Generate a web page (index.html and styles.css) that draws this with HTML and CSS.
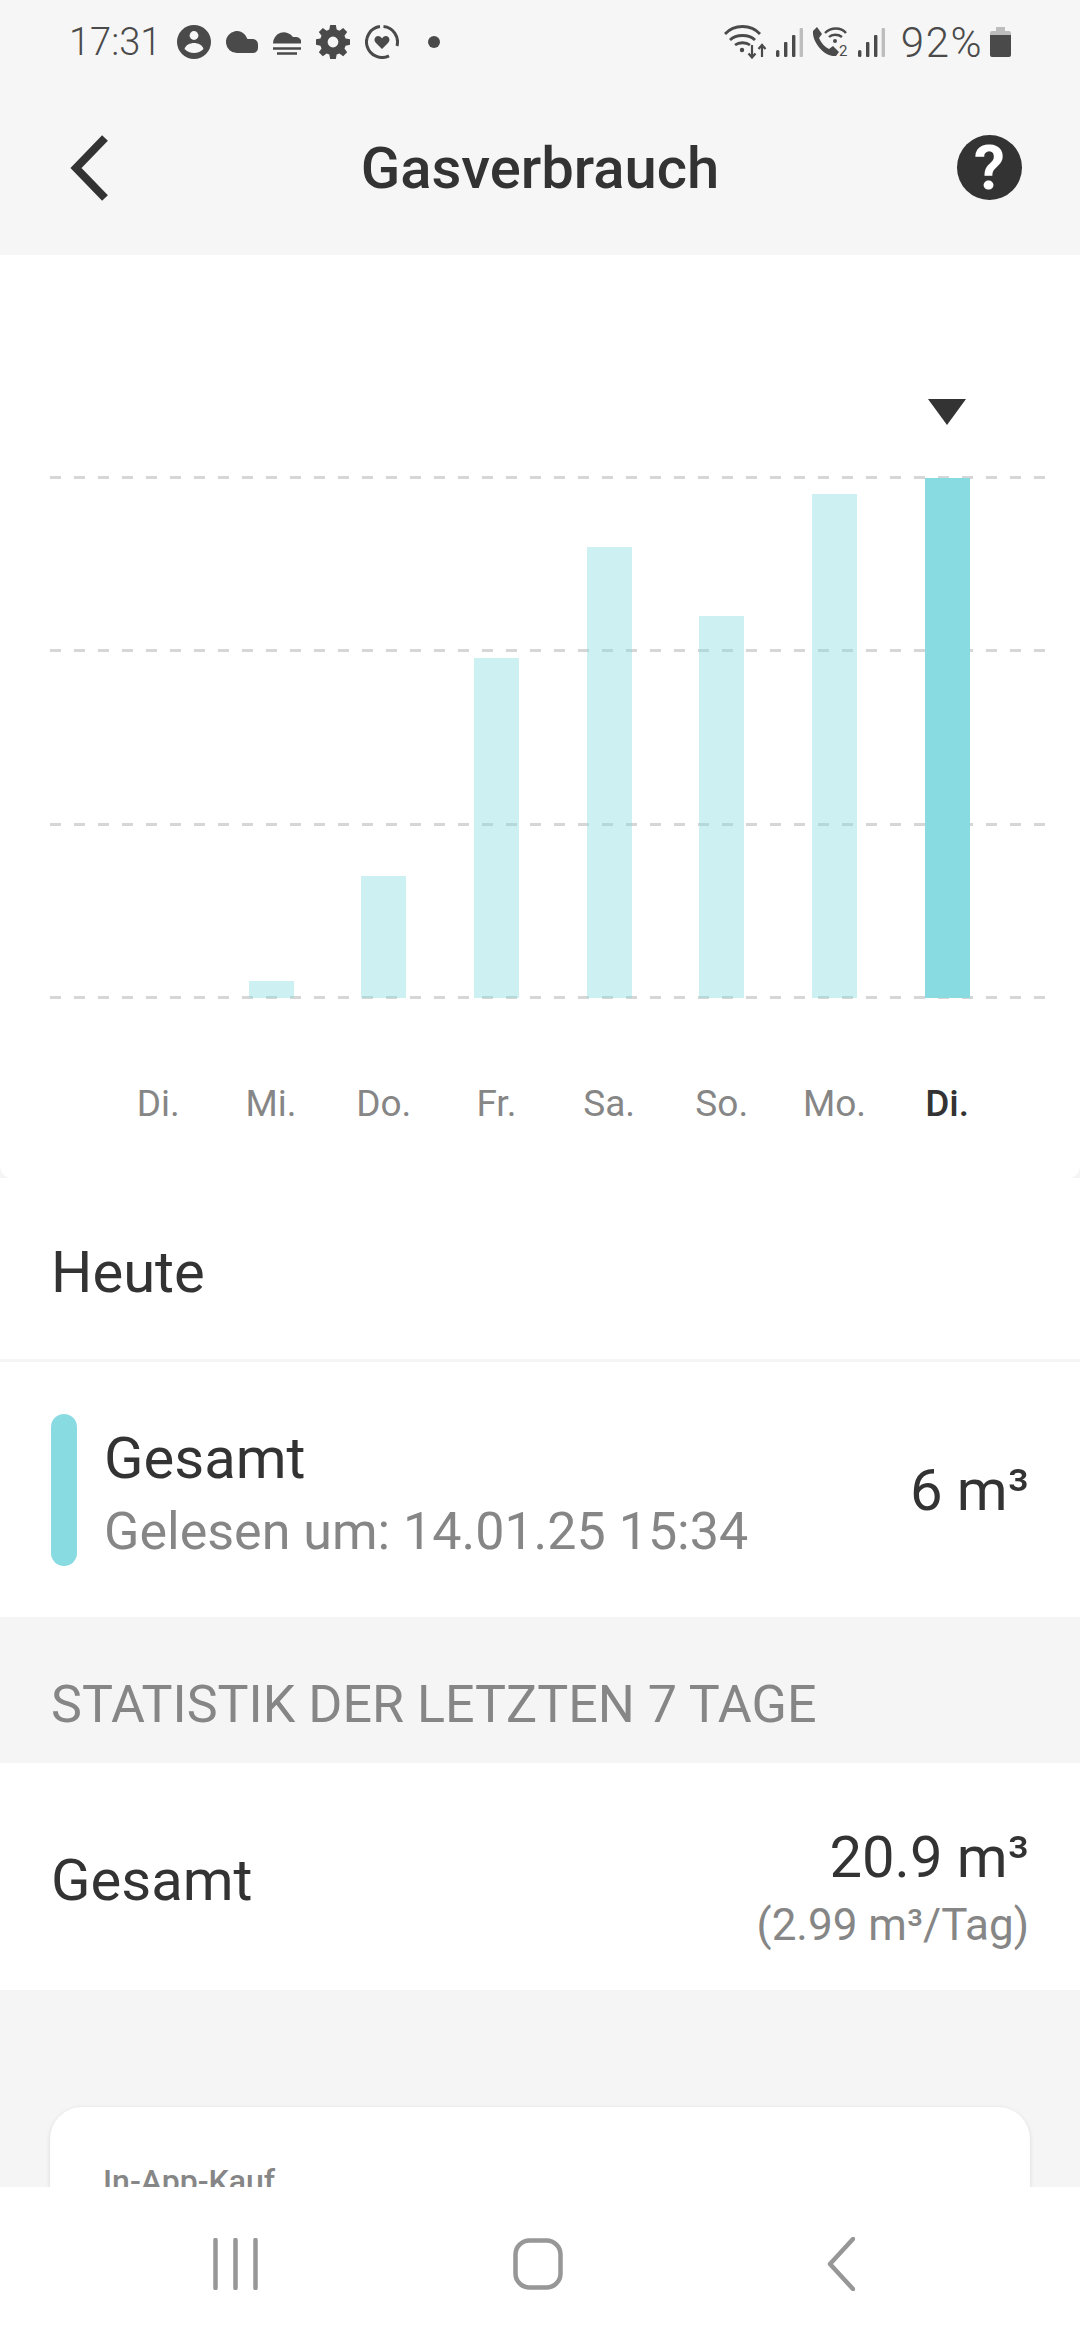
FILE: index.html
```html
<!DOCTYPE html>
<html lang="de">
<head>
    <meta charset="UTF-8">
    <title>Gasverbrauch</title>
    <link rel="stylesheet" href="styles.css">
</head>
<body>
    <div class="screen">
        <div class="status-bar">
            <span class="status-time">17:31</span>
            <div class="status-icons">
                <svg width="34" height="34" viewBox="0 0 34 34"><circle cx="17" cy="17" r="17" fill="#4a4a4a"/><circle cx="17" cy="10.500" r="4.400" fill="#f6f6f6"/><path d="M7.500 24c1-4 5.500-6 9.500-6s8.500 2 9.500 6c-2.500 2.500-6 4-9.500 4s-7-1.500-9.500-4z" fill="#f6f6f6"/></svg>
                <svg width="32" height="22" viewBox="0 0 32 22"><path d="M11 22A11 11 0 1 1 21.500 8H26.500a5.500 5.500 0 0 1 5.500 5.500V17a5 5 0 0 1-5 5z" fill="#4a4a4a"/></svg>
                <svg width="28" height="25" viewBox="0 0 28 25"><path d="M0 13.500A11 11 0 0 1 20 7h3a5 5 0 0 1 5 6.500z" fill="#4a4a4a"/><path d="M0 18.500h28M4 23.500h20" stroke="#4a4a4a" stroke-width="2.600" fill="none"/></svg>
                <svg width="34" height="34" viewBox="0 0 24 24"><path fill="#4a4a4a" fill-rule="evenodd" d="M10 0h4l.6 3.200 1.900.8L19.200 2.100l2.800 2.800-1.900 2.700.8 1.900 3.100.5v4l-3.100.6-.8 1.900 1.900 2.700-2.800 2.800-2.700-1.900-1.900.8L14 24h-4l-.6-3.100-1.900-.8-2.700 1.900L2 19.200l1.900-2.700-.8-1.900L0 14v-4l3.100-.5.8-1.900L2 4.900 4.800 2.100 7.500 4l1.900-.8zM12 8.200a3.800 3.800 0 1 0 0 7.600 3.800 3.800 0 0 0 0-7.600z"/></svg>
                <svg width="34" height="34" viewBox="0 0 34 34"><path d="M15 1.600A15.500 15.500 0 1 0 24 30.800M18.500 1.600A15.500 15.500 0 0 1 32 21" stroke="#4a4a4a" stroke-width="3" fill="none"/><path d="M17 24l-6-6c-3-3-1-7 2-7 2 0 3 1 4 2.500 1-1.500 2-2.500 4-2.500 3 0 5 4 2 7z" fill="#4a4a4a"/></svg>
                <span class="status-dot"></span>
            </div>
            <div class="status-right">
                <svg width="43" height="34" viewBox="0 0 43 34"><path d="M1 9c9-10 26-10 35 0M6 15c6-6 19-6 25 0M11 20c4-3 11-3 15 0" stroke="#4a4a4a" stroke-width="2.800" fill="none"/><circle cx="18" cy="25" r="2.200" fill="#4a4a4a"/><path d="M28 20v12M24.500 28.500l3.500 4 3.500-4M38 32V20M34.500 24l3.500-4 3.500 4" stroke="#4a4a4a" stroke-width="2.200" fill="none"/></svg>
                <svg width="27" height="30" viewBox="0 0 27 30"><rect x="0" y="23" width="3.400" height="7" rx="1.500" fill="#4a4a4a"/><rect x="8" y="15" width="3.400" height="15" rx="1" fill="#4a4a4a"/><rect x="16" y="8" width="3.400" height="22" rx="1" fill="#4a4a4a"/><rect x="23.600" y="1" width="3.400" height="29" rx="1" fill="#bdbdbd"/></svg>
                <svg width="37" height="30" viewBox="0 0 37 30"><path d="M5 0l5 7-3 4c2 5 6 9 10 11l4-3 6 6-3 4C12 30 0 15 1 4z" fill="#4a4a4a"/><path d="M13 6c6-6 16-6 21 0M17 10c3-3 9-3 13 0" stroke="#4a4a4a" stroke-width="2.400" fill="none"/><circle cx="23" cy="14" r="2" fill="#4a4a4a"/><text x="27" y="29" class="sim-number">2</text></svg>
                <svg width="27" height="30" viewBox="0 0 27 30"><rect x="0" y="23" width="3.400" height="7" rx="1.500" fill="#4a4a4a"/><rect x="8" y="15" width="3.400" height="15" rx="1" fill="#4a4a4a"/><rect x="16" y="8" width="3.400" height="22" rx="1" fill="#4a4a4a"/><rect x="23.600" y="1" width="3.400" height="29" rx="1" fill="#bdbdbd"/></svg>
                <span class="status-battery-text">92%</span>
                <svg width="21" height="30" viewBox="0 0 21 30"><path d="M6 0h9v4H6zM2 4h17a2 2 0 0 1 2 2v2H0V6a2 2 0 0 1 2-2z" fill="#bdbdbd"/><path d="M0 8h21v20a2 2 0 0 1-2 2H2a2 2 0 0 1-2-2z" fill="#4a4a4a"/></svg>
            </div>
        </div>

        <header class="app-header">
            <svg class="back-icon" width="40" height="66" viewBox="0 0 40 66"><path d="M36 3L7 33l29 30" stroke="#333" stroke-width="8" fill="none"/></svg>
            <h1>Gasverbrauch</h1>
            <span class="help-icon">?</span>
        </header>

        <main class="content">
            <div class="chart-wrap">
                <section class="chart-card">
                    <div class="marker-row"><span class="marker"></span></div>
                    <div class="plot">
                        <div class="grid-lines">
                            <span class="grid-line"></span>
                            <span class="grid-line"></span>
                            <span class="grid-line"></span>
                            <span class="grid-line"></span>
                        </div>
                        <div class="bars">
                            <div class="col"></div>
                            <div class="col"><span class="bar" style="height: 17px"></span></div>
                            <div class="col"><span class="bar" style="height: 122px"></span></div>
                            <div class="col"><span class="bar" style="height: 340px"></span></div>
                            <div class="col"><span class="bar" style="height: 451px"></span></div>
                            <div class="col"><span class="bar" style="height: 382px"></span></div>
                            <div class="col"><span class="bar" style="height: 504px"></span></div>
                            <div class="col"><span class="bar bar-active" style="height: 520px"></span></div>
                        </div>
                    </div>
                    <div class="days">
                        <span>Di.</span>
                        <span>Mi.</span>
                        <span>Do.</span>
                        <span>Fr.</span>
                        <span>Sa.</span>
                        <span>So.</span>
                        <span>Mo.</span>
                        <span class="day-active">Di.</span>
                    </div>
                </section>
            </div>

            <div class="row-today">Heute</div>

            <div class="row-total">
                <span class="total-swatch"></span>
                <div class="total-text">
                    <div class="total-name">Gesamt</div>
                    <div class="total-sub">Gelesen um: 14.01.25 15:34</div>
                </div>
                <div class="total-value">6 m³</div>
            </div>

            <div class="section-title">STATISTIK DER LETZTEN 7 TAGE</div>

            <div class="row-stat">
                <span class="stat-name">Gesamt</span>
                <div class="stat-values">
                    <div class="stat-value">20.9 m³</div>
                    <div class="stat-avg">(2.99 m³/Tag)</div>
                </div>
            </div>

            <section class="promo-card">
                <div class="promo-label">In-App-Kauf</div>
            </section>
        </main>

        <nav class="nav-bar">
            <svg width="45" height="52" viewBox="0 0 45 52"><path d="M2.500 2v48M22.500 2v48M42.500 2v48" stroke="#979797" stroke-width="4.500" stroke-linecap="round" fill="none"/></svg>
            <svg class="nav-home" width="50" height="52" viewBox="0 0 50 52"><rect x="2.500" y="2.500" width="45" height="47" rx="14" stroke="#979797" stroke-width="4.500" fill="none"/></svg>
            <svg width="28" height="54" viewBox="0 0 28 54"><path d="M26 2L3 27l23 25" stroke="#979797" stroke-width="4.500" stroke-linecap="round" stroke-linejoin="round" fill="none"/></svg>
        </nav>
    </div>
</body>
</html>
```

FILE: styles.css
```css
* {
    box-sizing: border-box;
}
body {
    margin: 0;
    font-family: Roboto, "Noto Sans", sans-serif;
    background: #f5f5f5;
    color: #333;
}
.screen {
    width: 1080px;
    height: 2340px;
    display: flex;
    flex-direction: column;
    overflow: hidden;
}

/* status bar */
.status-bar {
    height: 84px;
    flex-shrink: 0;
    display: flex;
    align-items: center;
    padding: 0 69px;
    background: #f6f6f6;
    color: #4a4a4a;
}
.status-time {
    font-size: 38px;
    font-weight: 300;
    margin-right: 16px;
}
.status-icons {
    display: flex;
    align-items: center;
    gap: 15px;
}
.status-dot {
    width: 12px;
    height: 12px;
    margin-left: 14px;
    border-radius: 50%;
    background: #4a4a4a;
}
.status-right {
    margin-left: auto;
    display: flex;
    align-items: center;
    gap: 9px;
}
.status-battery-text {
    font-size: 42px;
    font-weight: 300;
    letter-spacing: 1.500px;
    margin-left: 7px;
    margin-right: -2px;
}
.sim-number {
    font-family: Roboto, sans-serif;
    font-size: 15px;
    fill: #4a4a4a;
}

/* header */
.app-header {
    height: 171px;
    flex-shrink: 0;
    display: grid;
    grid-template-columns: 1fr auto 1fr;
    align-items: center;
    padding: 0 58px 4px;
    background: #f6f6f6;
}
.back-icon {
    margin-left: 11px;
}
.app-header h1 {
    margin: 0;
    font-size: 58px;
    font-weight: 500;
    color: #333;
}
.help-icon {
    justify-self: end;
    width: 65px;
    height: 65px;
    border-radius: 50%;
    background: #333;
    color: #fff;
    font-size: 62px;
    font-weight: 700;
    line-height: 65px;
    text-align: center;
}

.content {
    flex: 1;
    min-height: 0;
    overflow: hidden;
    background: #f5f5f5;
}

/* chart */
.chart-wrap {
    background: #f5f5f5;
}
.chart-card {
    height: 923px;
    padding: 144px 35px 0 50px;
    background: #fff;
    border-radius: 0 0 12px 12px;
}
.marker-row {
    height: 77px;
    padding-left: 878px;
}
.marker {
    display: block;
    width: 0;
    height: 0;
    border-left: 19px solid transparent;
    border-right: 19px solid transparent;
    border-top: 26px solid #333;
}
.plot {
    position: relative;
    height: 523px;
}
.grid-lines {
    position: absolute;
    inset: 0;
    display: flex;
    flex-direction: column;
    justify-content: space-between;
}
.grid-line {
    height: 3px;
    background: repeating-linear-gradient(to right, #d6d6d6 0, #d6d6d6 11px, transparent 11px, transparent 24px);
}
.bars {
    position: absolute;
    inset: 0 0 1px 0;
    display: flex;
    padding-left: 52px;
}
.col {
    width: 112.700px;
    flex-shrink: 0;
    display: flex;
    align-items: flex-end;
    justify-content: center;
}
.bar {
    display: block;
    width: 45px;
    background: rgba(136, 219, 224, 0.42);
}
.bar-active {
    background: #88dbe0;
}
.days {
    display: flex;
    padding: 83px 0 0 52px;
    font-size: 37px;
    color: #868686;
}
.days span {
    width: 112.700px;
    flex-shrink: 0;
    text-align: center;
}
.days .day-active {
    font-weight: 500;
    color: #333;
}

/* today rows */
.row-today {
    height: 184px;
    display: flex;
    align-items: center;
    padding: 6px 51px 0;
    background: #fff;
    border-bottom: 3px solid #f5f5f5;
    font-size: 58px;
}
.row-total {
    height: 255px;
    display: flex;
    align-items: center;
    padding: 0 51px;
    background: #fff;
}
.total-swatch {
    width: 26px;
    height: 152px;
    border-radius: 13px;
    background: #88dbe0;
}
.total-text {
    margin-left: 27px;
    padding-top: 6px;
}
.total-name {
    font-size: 58px;
    margin-bottom: 9px;
}
.total-sub {
    font-size: 52px;
    color: #868686;
}
.total-value {
    margin-left: auto;
    font-size: 58px;
}

.section-title {
    height: 146px;
    padding: 58px 51px 0;
    font-size: 52px;
    line-height: 60px;
    color: #868686;
}

.row-stat {
    height: 227px;
    display: flex;
    align-items: center;
    justify-content: space-between;
    padding: 6px 51px 0;
    background: #fff;
    font-size: 58px;
}
.stat-values {
    padding-top: 15px;
    text-align: right;
}
.stat-value {
    font-size: 58px;
}
.stat-avg {
    margin-top: 8px;
    font-size: 44px;
    color: #868686;
}

/* promo card, cut off by the nav bar */
.promo-card {
    margin: 117px 50px 0;
    height: 300px;
    padding: 55px 53px;
    background: #fff;
    border-radius: 32px;
    box-shadow: 0 1px 4px rgba(0, 0, 0, 0.12);
}
.promo-label {
    font-size: 32px;
    font-weight: 500;
    color: #868686;
}

/* nav bar */
.nav-bar {
    height: 153px;
    flex-shrink: 0;
    position: relative;
    display: flex;
    align-items: center;
    justify-content: space-between;
    padding: 0 225px 0 213px;
    background: #fff;
}
.nav-home {
    margin-right: 10px;
}
```
